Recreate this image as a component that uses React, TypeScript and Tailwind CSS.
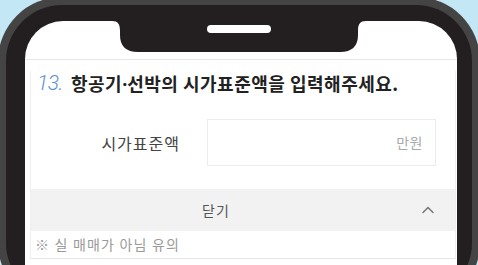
import { ChevronUp } from "lucide-react"

const kr = "font-['Noto_Sans_CJK_KR','Noto_Sans',sans-serif]"

function Notch() {
    return (
        <div className="absolute left-[87px] top-0 w-[254px] h-[32px]">
            <svg width="254" height="32" viewBox="0 0 254 32" className="absolute inset-0">
                <path
                    d="M0 0 C6 0 8 3 8 10 L8 14 Q8 31 26 31 L228 31 Q246 31 246 14 L246 10 C246 3 248 0 254 0 Z"
                    fill="#231f20"
                />
            </svg>
            <div className="absolute left-[95px] top-[4px] w-[64px] h-[8px] rounded-full bg-white" />
        </div>
    )
}

export default function App() {
    return (
        <div className={`w-[478px] h-[265px] overflow-hidden bg-[#c4e7f5] ${kr}`}>
            {/* phone body */}
            <div className="-ml-[2px] -mt-[3px] w-[482px] h-[310px] rounded-[64px] bg-[#454444] p-[8px]">
                <div className="h-full rounded-[56px] bg-[#231f20] pt-[16px] pl-[19px] pr-[15px]">
                    <div className="relative h-full rounded-t-[38px] bg-white">
                        <Notch />
                        <div className="h-[39px] border-b border-[#e6e6e6]" />

                        <div className="ml-[5px] mr-[1px] border-l border-r border-[#efefef]">
                            {/* question */}
                            <div className="flex items-center h-[26px] mt-[11px] pl-[6px]">
                                <span className="font-['Roboto',sans-serif] font-light italic text-[21px] text-[#5e8fd6] tracking-[-0.5px]">13.</span>
                                <span className="ml-[8px] text-[18px] font-bold text-[#222] tracking-[0.5px]">
                                    항공기<span className="font-['Noto_Sans',sans-serif] tracking-normal">·</span>선박의 시가표준액을 입력해주세요.
                                </span>
                            </div>

                            {/* input row */}
                            <div className="flex items-center mt-[22px]">
                                <div className="w-[149px] text-right text-[16px] text-[#444] tracking-[1px]">시가표준액</div>
                                <div className="ml-[27px] w-[229px] h-[47px] border border-[#ececec] flex items-center justify-end pr-[12px]">
                                    <span className="text-[14px] text-[#aaa] tracking-[0.5px]">만원</span>
                                </div>
                            </div>

                            {/* toggle bar */}
                            <div className="mt-[23px] h-[42px] bg-[#f2f2f2] flex items-center">
                                <div className="flex-1 text-center text-[14px] text-[#555] tracking-[1px]">닫기</div>
                                <div className="w-[54px] flex justify-center">
                                    <ChevronUp className="w-[20px] h-[20px] text-[#777]" strokeWidth={1.75} />
                                </div>
                            </div>

                            <div className="h-[28px] flex items-center pl-[4px] text-[14px] text-[#9a9a9a] tracking-[1.2px] border-b border-[#e6e6e6]">
                                ※ 실 매매가 아님 유의
                            </div>
                        </div>
                    </div>
                </div>
            </div>
        </div>
    )
}
